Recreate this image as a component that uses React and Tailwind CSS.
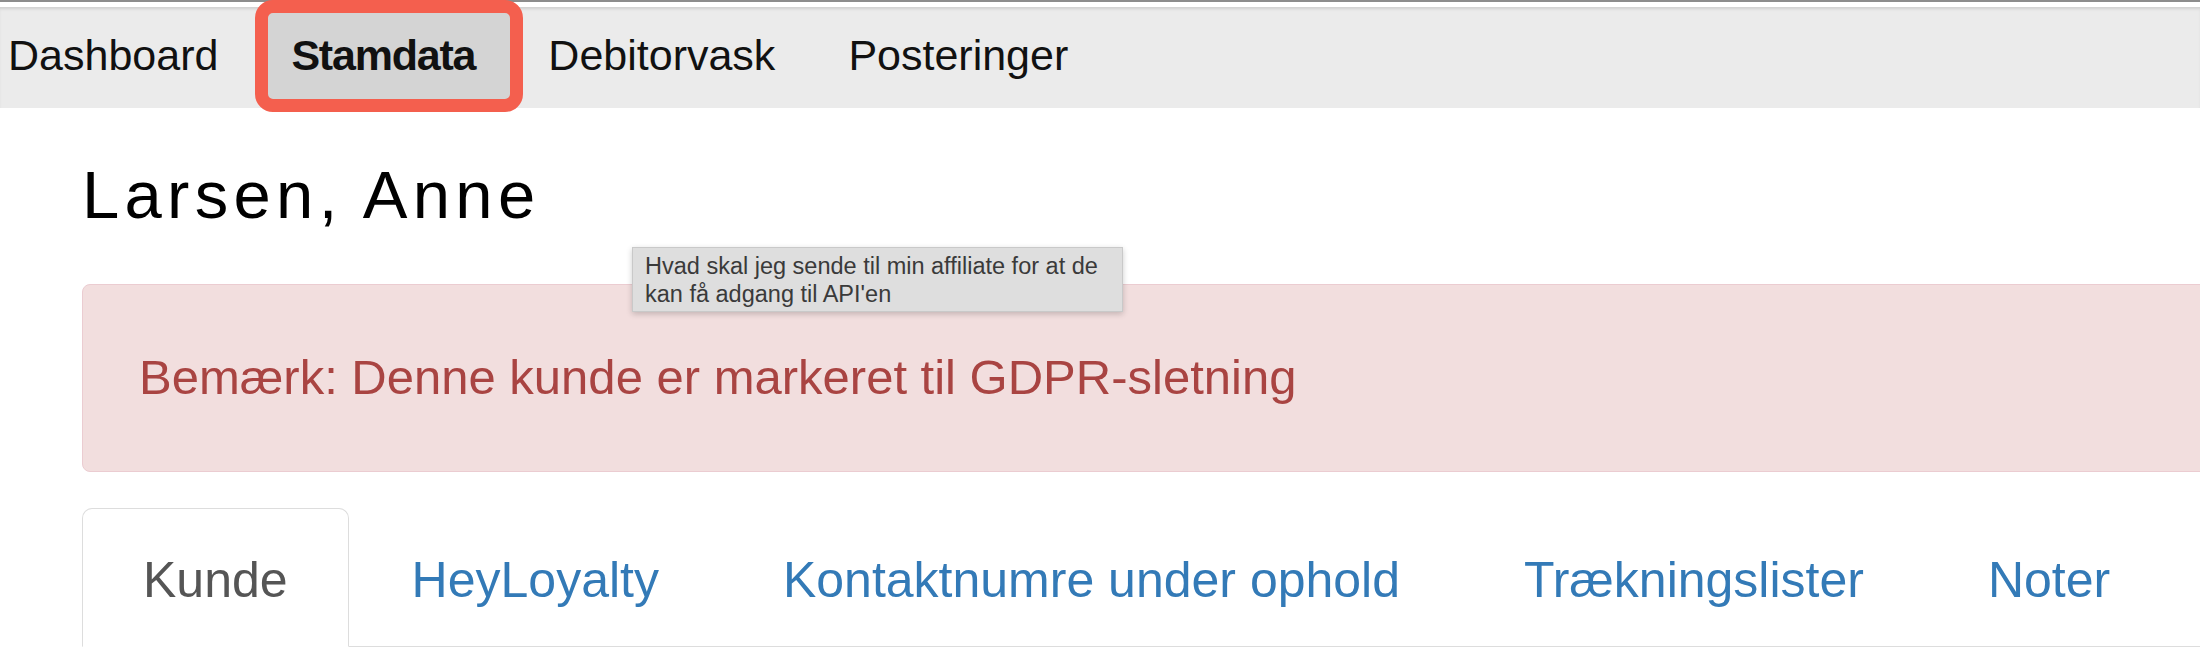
import React from 'react';

const navItems = ['Dashboard', 'Stamdata', 'Debitorvask', 'Posteringer'];
const tabs = ['Kunde', 'HeyLoyalty', 'Kontaktnumre under ophold', 'Trækningslister', 'Noter'];

export default function App() {
  return (
    <div className="relative w-[2200px] h-[650px] overflow-hidden bg-white font-['Liberation_Sans',Arial,sans-serif]">
      {/* top chrome line */}
      <div className="h-[2px] bg-[#8c8c8c]" />
      <div className="h-[5px] bg-white" />

      {/* main nav */}
      <nav className="h-[101px] bg-[#ebebeb] shadow-[inset_0_3px_3px_-1px_rgba(0,0,0,0.12)] flex items-center pl-[8px] pb-[5px] gap-[73px] text-[43px] text-[#111]">
        {navItems.map((item) => (
          <span
            key={item}
            className={item === 'Stamdata' ? 'relative z-10 font-bold tracking-[-1.2px]' : ''}
          >
            {item}
          </span>
        ))}
      </nav>

      {/* highlight around active nav item */}
      <div className="absolute left-[255px] top-0 w-[268px] h-[112px] rounded-[18px] border-[13px] border-[#f45f4e] bg-[#d4d4d4]" />

      <div className="pl-[82px]">
        <h1 className="mt-[53px] text-[67px] leading-none tracking-[5.3px] text-black">Larsen, Anne</h1>

        {/* alert */}
        <div className="mt-[56px] w-[2200px] h-[188px] flex items-center pl-[56px] rounded-[8px] border border-[#ebccd1] bg-[#f2dede] text-[49px] text-[#a94442]">
          Bemærk: Denne kunde er markeret til GDPR-sletning
        </div>

        {/* tabs */}
        <ul className="mt-[36px] flex border-b border-[#dddddd] w-[2200px]">
          {tabs.map((tab, i) => (
            <li key={tab} className="-mb-px mr-[2px]">
              <a
                className={
                  i === 0
                    ? 'block px-[60px] pt-[36px] pb-[31px] leading-[70px] text-[50px] text-[#555555] bg-white border border-[#dddddd] border-b-transparent rounded-t-[10px]'
                    : 'block px-[60px] pt-[36px] pb-[31px] leading-[70px] text-[50px] text-[#337ab7] border border-transparent'
                }
              >
                {tab}
              </a>
            </li>
          ))}
        </ul>
      </div>

      {/* native tooltip */}
      <div className="absolute left-[632px] top-[247px] w-[491px] h-[65px] bg-[#dedede] border border-[#c9c9c9] shadow-[0_2px_6px_rgba(0,0,0,0.2)] pl-[12px] pt-[4px] text-[23.5px] leading-[28px] text-[#3a3a3a] whitespace-nowrap">
        Hvad skal jeg sende til min affiliate for at de
        <br />
        kan få adgang til API'en
      </div>
    </div>
  );
}
